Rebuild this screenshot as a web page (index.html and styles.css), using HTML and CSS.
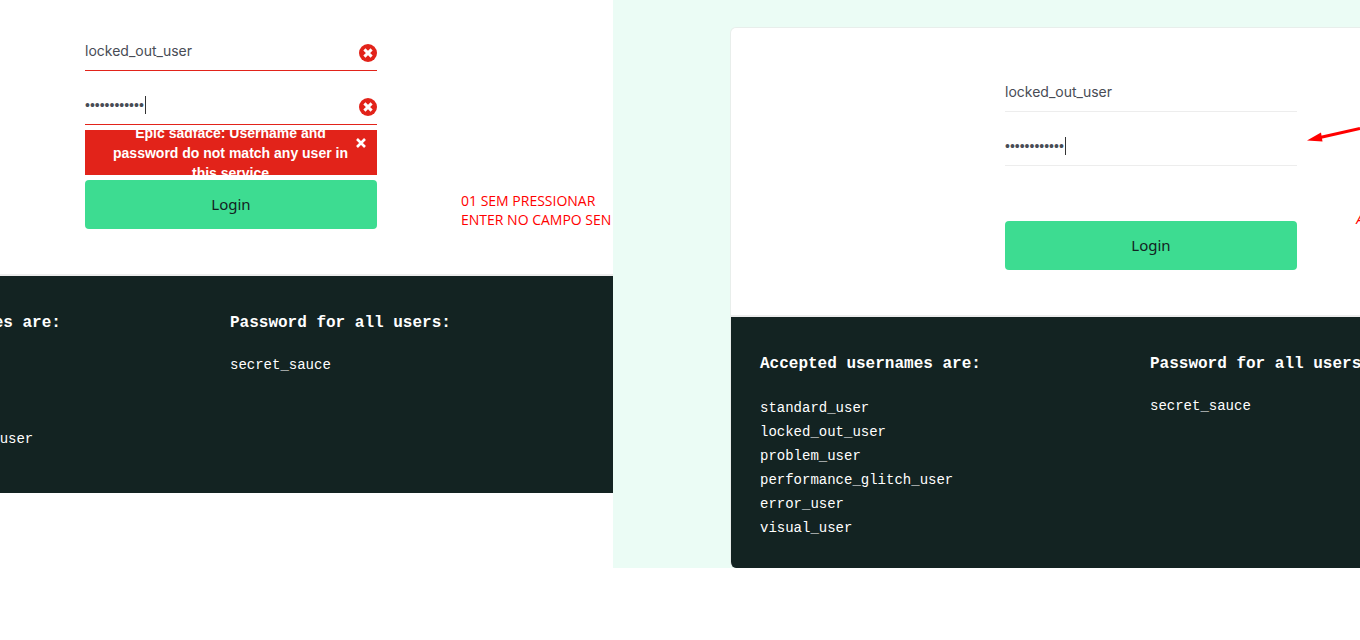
FILE: index.html
```html
<!DOCTYPE html>
<html lang="pt">
<head>
<meta charset="utf-8">
<title>Login</title>
<link rel="stylesheet" href="styles.css">
</head>
<body>
<main class="compare">
  <section class="pane pane-error">
    <div class="card">
      <form class="login">
        <div class="field invalid">
          <input type="text" value="locked_out_user" aria-label="Username">
          <svg class="mark" viewBox="0 0 18 18" aria-hidden="true"><circle cx="9" cy="9" r="9" fill="#e2231a"/><path d="M5.4 5.4L12.6 12.6M12.6 5.4L5.4 12.6" stroke="#fff" stroke-width="3"/></svg>
        </div>
        <div class="field invalid">
          <input type="password" value="secret_sauc3" aria-label="Password">
          <span class="caret"></span>
          <svg class="mark" viewBox="0 0 18 18" aria-hidden="true"><circle cx="9" cy="9" r="9" fill="#e2231a"/><path d="M5.4 5.4L12.6 12.6M12.6 5.4L5.4 12.6" stroke="#fff" stroke-width="3"/></svg>
        </div>
        <div class="message error">
          <h3>Epic sadface: Username and password do not match any user in this service</h3>
          <button class="dismiss" type="button" aria-label="Close"><svg viewBox="0 0 10 10"><path d="M1 1L9 9M9 1L1 9" stroke="#fff" stroke-width="2.6"/></svg></button>
        </div>
        <button class="submit" type="button">Login</button>
      </form>
      <div class="credentials">
        <div>
          <h4>Accepted usernames are:</h4>
          <ul><li>standard_user</li><li>locked_out_user</li><li>problem_user</li><li>performance_glitch_user</li></ul>
        </div>
        <div>
          <h4>Password for all users:</h4>
          <p>secret_sauce</p>
        </div>
      </div>
    </div>
    <p class="note note-enter">01 SEM PRESSIONAR<br>ENTER NO CAMPO SEN</p>
  </section>
  <section class="pane pane-clean">
    <div class="card">
      <form class="login">
        <div class="field">
          <input type="text" value="locked_out_user" aria-label="Username">
        </div>
        <div class="field">
          <input type="password" value="secret_sauc3" aria-label="Password">
          <span class="caret"></span>
        </div>
        <div class="message"></div>
        <button class="submit" type="button">Login</button>
      </form>
      <div class="credentials">
        <div>
          <h4>Accepted usernames are:</h4>
          <ul><li>standard_user</li><li>locked_out_user</li><li>problem_user</li><li>performance_glitch_user</li><li>error_user</li><li>visual_user</li></ul>
        </div>
        <div>
          <h4>Password for all users:</h4>
          <p>secret_sauce</p>
        </div>
      </div>
    </div>
    <svg class="arrow" viewBox="0 0 53 20" aria-hidden="true"><path d="M53 4.5L13 13.5" stroke="#f00" stroke-width="3"/><path d="M0 16.5L14 8.5L15.5 17.5Z" fill="#f00"/></svg>
    <p class="note note-edge">A</p>
  </section>
</main>
</body>
</html>
```
FILE: styles.css
```css
* { box-sizing: border-box; }
body { margin: 0; background: #fff; font-family: Inter, "Liberation Sans", sans-serif; }
h3, h4, p, ul { margin: 0; padding: 0; }
.compare { display: grid; grid-template-columns: 613fr 747fr; align-items: start; overflow: hidden; }
.pane { position: relative; overflow: hidden; min-width: 0; }
.pane-clean { background: #ebfcf5; padding: 27px 0 0 117px; }
.card { width: 842px; background: #fff; border: 1px solid #e8eeeb; border-bottom: 0; border-radius: 6px; overflow: hidden; }
.pane-error .card { margin-left: -190px; border-top: 0; border-radius: 0; }
.login { padding: 45px 274px; border-bottom: 2px solid #ededed; }
.pane-error .login { padding-top: 32px; }
.field { position: relative; margin-bottom: 15px; }
.field input { display: block; width: 100%; height: 39px; padding: 0 0 2px; border: 0; border-bottom: 1px solid #ededed; background: transparent; color: #484c55; font: 14px/20px Inter, sans-serif; outline: 0; }
.field input[type="password"] { padding: 0; font-family: "Liberation Sans", sans-serif; }
.field.invalid input { border-color: #e2231a; }
.caret { position: absolute; left: 60px; top: 10px; width: 1px; height: 18px; background: #333; }
.mark { position: absolute; right: 0; top: 12px; width: 18px; height: 18px; }
.message { position: relative; height: 45px; margin: -10px 0 5px; display: flex; align-items: center; justify-content: center; overflow: hidden; }
.message.error { background: #e2231a; }
.message h3 { padding: 0 28px 0 27px; color: #fff; text-align: center; font: bold 14px/20px "Liberation Sans", sans-serif; }
.dismiss { position: absolute; right: 11px; top: 8px; padding: 0; border: 0; background: transparent; width: 10px; height: 10px; }
.dismiss svg { display: block; width: 10px; height: 10px; }
.submit { display: block; width: 100%; height: 49px; padding: 0 0 2px; border: 0; border-radius: 4px; background: #3ddc91; color: #132322; font: 15px/24px "Noto Sans", sans-serif; }
.credentials { display: grid; grid-template-columns: 390px 1fr; padding: 35px 29px 28px; background: #132322; color: #fff; font: 14px/24px "Liberation Mono", monospace; }
.pane-error .credentials { padding-bottom: 42px; }
.credentials h4 { font-size: 16px; line-height: 24px; }
.credentials ul { list-style: none; margin-top: 20px; }
.credentials p { margin-top: 18px; }
.note { position: absolute; color: #f00; font: 14px/19px "Open Sans", sans-serif; white-space: nowrap; }
.note-enter { left: 461px; top: 191px; }
.note-edge { right: -4px; top: 209px; font-style: italic; }
.arrow { position: absolute; right: 0; top: 124px; width: 53px; height: 20px; }
```
